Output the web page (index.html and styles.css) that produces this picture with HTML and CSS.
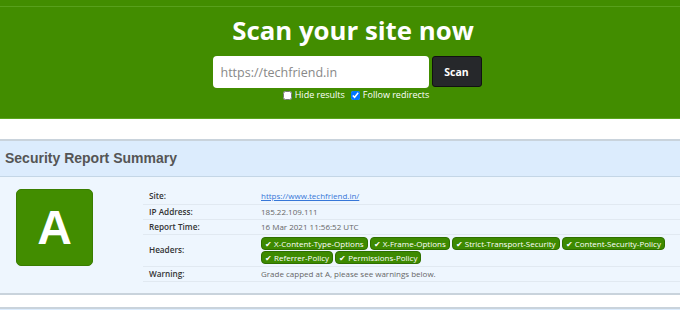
FILE: index.html
```html
<!DOCTYPE html>
<html lang="en">
<head>
  <meta charset="UTF-8" />
  <meta name="viewport" content="width=device-width, initial-scale=1.0" />
  <title>Scan your site now</title>
  <link rel="stylesheet" href="styles.css">
</head>
<body>

  <div class="topbar"></div>

  <div class="hero">
    <h1>Scan your site now</h1>
    <form class="scan">
      <div class="scan-row">
        <input type="text" placeholder="https://techfriend.in">
        <button type="submit">Scan</button>
      </div>
      <div class="opts">
        <label><input type="checkbox"> Hide results</label>
        <label><input type="checkbox" checked> Follow redirects</label>
      </div>
    </form>
  </div>

  <div class="card">
    <div class="card-head">Security Report Summary</div>
    <div class="card-body">
      <div class="grade">A</div>
      <table class="report">
        <tr>
          <th>Site:</th>
          <td><a href="#">https://www.techfriend.in/</a></td>
        </tr>
        <tr>
          <th>IP Address:</th>
          <td>185.22.109.111</td>
        </tr>
        <tr>
          <th>Report Time:</th>
          <td>16 Mar 2021 11:56:52 UTC</td>
        </tr>
        <tr>
          <th>Headers:</th>
          <td class="headers">
            <div class="badges">
              <span class="badge">&#10004; X-Content-Type-Options</span>
              <span class="badge">&#10004; X-Frame-Options</span>
              <span class="badge">&#10004; Strict-Transport-Security</span>
              <span class="badge">&#10004; Content-Security-Policy</span>
              <span class="badge">&#10004; Referrer-Policy</span>
              <span class="badge">&#10004; Permissions-Policy</span>
            </div>
          </td>
        </tr>
        <tr>
          <th>Warning:</th>
          <td>Grade capped at A, please see warnings below.</td>
        </tr>
      </table>
    </div>
  </div>

  <div class="card next">
    <div class="card-head"></div>
  </div>

</body>
</html>
```

FILE: styles.css
```css
* { box-sizing: border-box; }
body {
  margin: 0;
  font-family: 'Open Sans', sans-serif;
  color: #333;
  background: #fff;
}
.topbar {
  height: 7px;
  background: #428d00;
  border-bottom: 1px solid #58a01c;
}
.hero {
  background: #428d00;
  border-bottom: 1px solid #5aa51e;
  padding: 3px 0 0 26px;
  height: 112px;
  text-align: center;
}
h1 {
  margin: 0;
  color: #fff;
  font-size: 25.8px;
  font-weight: 700;
  line-height: 40px;
}
.scan-row {
  display: flex;
  justify-content: center;
  gap: 3px;
  margin-top: 6px;
  padding-right: 12px;
}
.scan input[type="text"] {
  width: 216px;
  height: 32px;
  border: 0;
  border-radius: 4px;
  padding: 0 8px;
  font-family: 'Open Sans', sans-serif;
  font-size: 12.5px;
  color: #333;
  outline: none;
}
.scan input::placeholder { color: #888; }
.scan button {
  width: 50px;
  height: 31px;
  border: 1px solid #111;
  border-radius: 3px;
  background: #26282b;
  color: #fff;
  font-family: 'Open Sans', sans-serif;
  font-weight: 700;
  font-size: 10.5px;
}
.opts {
  display: flex;
  justify-content: center;
  gap: 6px;
  margin-top: 1px;
  padding-left: 6px;
  color: #fff;
  font-size: 9px;
  line-height: 12px;
}
.opts label { display: flex; align-items: center; gap: 3px; }
.opts input { width: 9px; height: 9px; margin: 0; }

.card {
  margin-top: 20px;
  border-top: 2px solid #c9d3dc;
  border-bottom: 2px solid #c9d3dc;
  background: #eef6fe;
}
.card.next { margin-top: 12px; }
.card-head {
  height: 36px;
  padding: 0 5px;
  background: #dcecfd;
  border-bottom: 1px solid #c4d6e6;
  color: #555;
  font-family: 'Liberation Sans', sans-serif;
  font-weight: 700;
  font-size: 14px;
  line-height: 35px;
}
.card-body {
  display: flex;
  gap: 50px;
  padding: 12px 0 11px 16px;
}
.grade {
  flex: none;
  width: 77px;
  height: 77px;
  background: #428d00;
  border: 1px solid #3a7d00;
  border-radius: 5px;
  color: #fff;
  font-family: 'Liberation Sans', sans-serif;
  font-weight: 700;
  font-size: 48px;
  line-height: 76px;
  text-align: center;
}
.report {
  flex: 1;
  align-self: flex-start;
  border-collapse: collapse;
  font-size: 8px;
}
.report th, .report td {
  text-align: left;
  border-bottom: 1px solid #e1e9f1;
  padding: 0 6px;
  height: 15px;
  line-height: 14px;
}
.report th {
  width: 112px;
  font-size: 8.2px;
  font-weight: 600;
  color: #333;
}
.report td { color: #666; }
.report a { color: #3777d8; }
.report td.headers { padding-top: 2px; padding-bottom: 2px; }
.badges {
  display: flex;
  flex-wrap: wrap;
  gap: 1px 2px;
}
.badge {
  background: #3d8a00;
  border: 1px solid #2e6f00;
  border-radius: 4px;
  color: #fff;
  padding: 0 3px;
  font-size: 8px;
  line-height: 11px;
}
```
